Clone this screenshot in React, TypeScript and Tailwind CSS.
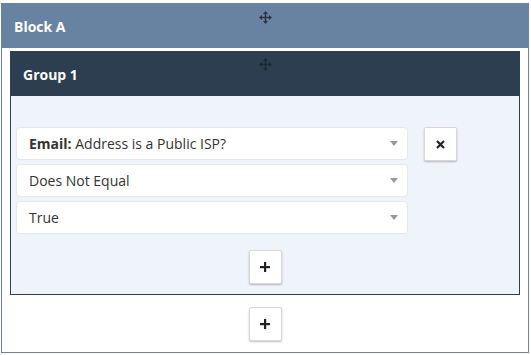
import React from "react";

function MoveIcon({ color }: { color: string }) {
  return (
    <svg width="13" height="13" viewBox="0 0 13 13" fill={color}>
      <rect x="5.8" y="2" width="1.4" height="9" />
      <rect x="2" y="5.8" width="9" height="1.4" />
      <polygon points="6.5,0 9,3 4,3" />
      <polygon points="6.5,13 9,10 4,10" />
      <polygon points="0,6.5 3,4 3,9" />
      <polygon points="13,6.5 10,4 10,9" />
    </svg>
  );
}

function Caret() {
  return (
    <svg width="8" height="5" viewBox="0 0 8 5" className="shrink-0">
      <polygon points="0,0 8,0 4,5" fill="#999" />
    </svg>
  );
}

function Select({ children }: { children: React.ReactNode }) {
  return (
    <div className="h-[33px] bg-white border border-[#e6e8ec] rounded-[4px] flex items-center pl-[12px] pr-[9px] text-[14px] text-[#333]">
      <div className="flex-1">{children}</div>
      <Caret />
    </div>
  );
}

function SquareButton({ children }: { children: React.ReactNode }) {
  return (
    <div className="w-[33px] h-[34px] bg-white border border-[#d8d8d8] rounded-[2px] shadow-[0_1px_2px_rgba(0,0,0,0.25)] flex items-center justify-center text-[#222]">
      {children}
    </div>
  );
}

function Plus() {
  return (
    <svg width="10" height="10" viewBox="0 0 10 10">
      <rect x="4" y="0" width="2.2" height="10" fill="#222" />
      <rect x="0" y="4" width="10" height="2.2" fill="#222" />
    </svg>
  );
}

function Times() {
  return (
    <svg width="9" height="9" viewBox="0 0 9 9">
      <path d="M1 1 L8 8 M8 1 L1 8" stroke="#222" strokeWidth="2.2" />
    </svg>
  );
}

export default function App() {
  return (
    <div
      className="w-[531px] h-[355px] bg-white pt-[3px] pl-[1px]"
      style={{ fontFamily: '"Open Sans", "Liberation Sans", sans-serif' }}
    >
      <div className="w-[528px] border border-[#6882a2] bg-white">
        <div className="relative h-[44px] bg-[#6882a2] flex items-center pl-[12px] text-white font-bold text-[14px]">
          Block A
          <div className="absolute left-[257px] top-[7px]">
            <MoveIcon color="#2a3440" />
          </div>
        </div>
        <div className="pt-[3px] px-[8px]">
          <div className="border border-[#2c3e50]">
            <div className="relative h-[44px] bg-[#2c3e50] flex items-center pl-[12px] text-white font-bold text-[14px]">
              Group 1
              <div className="absolute left-[248px] top-[6px]">
                <MoveIcon color="#1c2834" />
              </div>
            </div>
            <div className="bg-[#eff3fa] pt-[31px] pb-[10px] pl-[5px]">
              <div className="flex gap-[16px]">
                <div className="w-[392px] flex flex-col gap-[4px]">
                  <Select>
                    <span className="font-bold">Email:</span> Address is a Public ISP?
                  </Select>
                  <Select>Does Not Equal</Select>
                  <Select>True</Select>
                </div>
                <div>
                  <SquareButton>
                    <Times />
                  </SquareButton>
                </div>
              </div>
              <div className="flex justify-center mt-[16px] pr-[5px]">
                <SquareButton>
                  <Plus />
                </SquareButton>
              </div>
            </div>
          </div>
        </div>
        <div className="flex justify-center pt-[12px] pb-[11px]">
          <SquareButton>
            <Plus />
          </SquareButton>
        </div>
      </div>
    </div>
  );
}
